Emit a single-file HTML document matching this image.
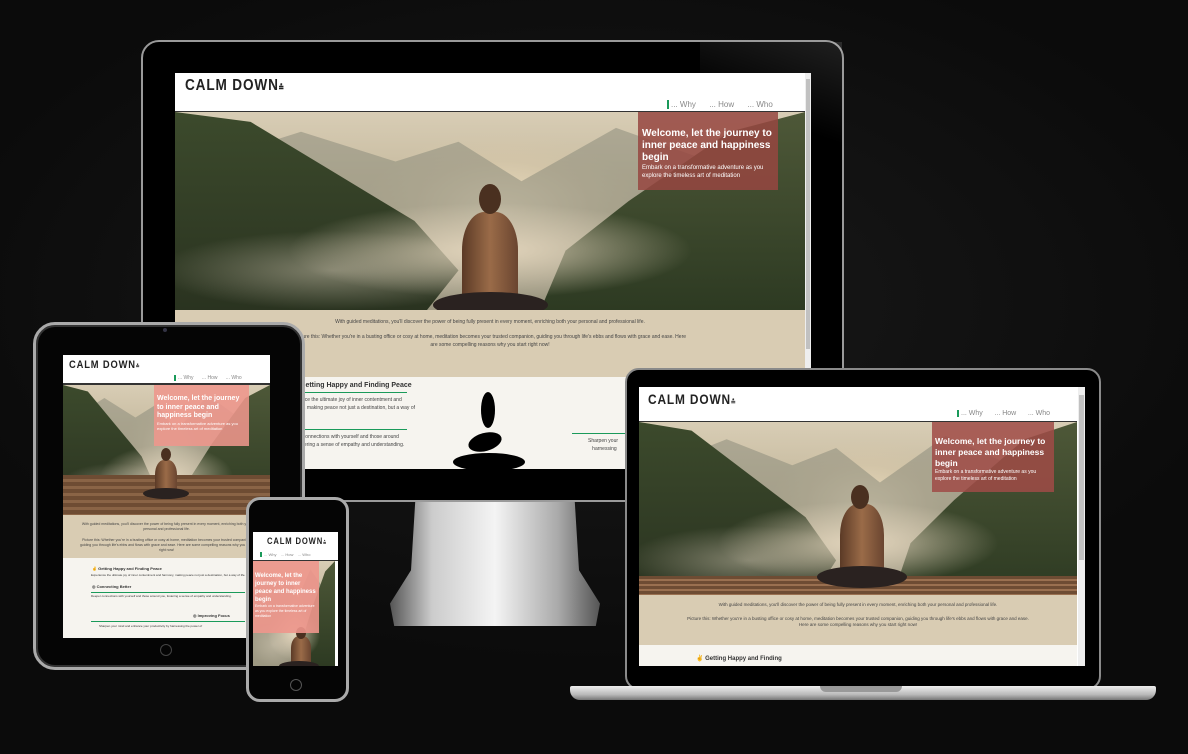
<!DOCTYPE html>
<html><head><meta charset="utf-8"><style>
*{margin:0;padding:0;box-sizing:border-box}
body{width:1188px;height:754px;overflow:hidden;background:radial-gradient(ellipse 70% 60% at 50% 40%,#1a1a1a,#0b0b0b 80%);position:relative;font-family:"Liberation Sans",sans-serif}
.a{position:absolute}
.logo{font-family:"Liberation Sans Narrow","Liberation Sans",sans-serif;font-weight:bold;color:#222;letter-spacing:1px;transform:scaleX(.85);transform-origin:left}
.nav{color:#888;font-size:7px}
.nav b{font-weight:normal;border-left:2px solid #1a9a5a;padding-left:2px}
.hero{overflow:hidden;background:
radial-gradient(ellipse 28% 50% at 52% 50%,rgba(240,225,195,.95),rgba(215,200,170,.6) 50%,transparent 80%),
linear-gradient(180deg,#d8cdb5 0%,#c9bda2 30%,#b0a58a 100%)}
.hero .m{position:absolute;left:0;top:0;width:100%;height:100%}
.m1{background:#8d8c7c;opacity:.55;clip-path:polygon(0 30%,20% 10%,35% 25%,45% 15%,55% 35%,70% 8%,85% 25%,100% 15%,100% 100%,0 100%)}
.m2{background:linear-gradient(180deg,#3c4a2c,#2a3320);clip-path:polygon(0 0,12% 5%,25% 30%,38% 55%,45% 80%,40% 100%,0 100%)}
.m3{background:linear-gradient(180deg,#4e5838,#2d3a22);clip-path:polygon(100% 0,88% 10%,72% 45%,62% 70%,58% 100%,100% 100%)}
.mist{background:radial-gradient(ellipse 40% 30% at 50% 70%,rgba(235,220,195,.85),transparent 80%),radial-gradient(ellipse 35% 25% at 25% 80%,rgba(210,200,180,.5),transparent 80%)}
.beige{background:#d9ccb3}
.light{background:#f6f4ef}
.welc{color:#fff;font-weight:bold}
.welc p{font-weight:normal}
.fig .h{position:absolute;background:#4a3020;border-radius:50%}
.fig .b{position:absolute;background:linear-gradient(90deg,#5b3a26,#9a6b48,#6a4530);border-radius:40% 40% 10% 10%}
.fig .l{position:absolute;background:#2a2220;border-radius:50%}
.txt{font-size:5px;color:#444;text-align:center;line-height:1.5}
</style></head><body>

<!-- MONITOR -->
<div class="a" style="left:141px;top:40px;width:703px;height:462px;border-radius:18px;background:#000;border:2px solid #9a9a9a"></div>
<div class="a" style="left:700px;top:42px;width:142px;height:120px;background:linear-gradient(200deg,rgba(255,255,255,.12),transparent 60%)"></div>
<div class="a" style="left:390px;top:502px;width:210px;height:124px;background:linear-gradient(90deg,#555,#ccc 20%,#f4f4f4 50%,#aaa 80%,#555);clip-path:polygon(12% 0,88% 0,90% 55%,100% 82%,98% 100%,2% 100%,0 82%,10% 55%)"></div>
<div class="a" style="left:175px;top:73px;width:636px;height:396px;background:#fff;overflow:hidden">
  <div class="a logo" style="left:10px;top:4px;font-size:16px">CALM DOWN<span style="font-size:10px">⩮</span></div>
  <div class="a nav" style="left:492px;top:27px;font-size:8px"><b>... Why</b>&nbsp;&nbsp;&nbsp;&nbsp;&nbsp;&nbsp;... How&nbsp;&nbsp;&nbsp;&nbsp;&nbsp;&nbsp;... Who</div>
  <div class="a" style="left:0;top:38px;width:630px;height:1px;background:#333"></div>
  <div class="a hero" style="left:0;top:39px;width:630px;height:198px">
    <div class="m m1"></div><div class="m m2"></div><div class="m m3"></div><div class="m mist"></div>
    <div class="fig"><div class="b" style="left:287px;top:100px;width:56px;height:95px"></div><div class="h" style="left:304px;top:72px;width:22px;height:30px"></div><div class="l" style="left:258px;top:180px;width:115px;height:26px"></div></div>
    <div class="a welc" style="left:463px;top:0;width:140px;height:78px;background:rgba(150,70,65,.85);padding:16px 4px 0;font-size:10px;line-height:12px">Welcome, let the journey to inner peace and happiness begin<p style="font-size:6px;line-height:8px">Embark on a transformative adventure as you explore the timeless art of meditation</p></div>
  </div>
  <div class="a beige" style="left:0;top:237px;width:630px;height:67px"><div class="txt" style="margin:9px 115px 0">With guided meditations, you'll discover the power of being fully present in every moment, enriching both your personal and professional life.<br><br>Picture this: Whether you're in a busting office or cosy at home, meditation becomes your trusted companion, guiding you through life's ebbs and flows with grace and ease. Here are some compelling reasons why you start right now!</div></div>
  <div class="a light" style="left:0;top:304px;width:630px;height:92px">
    <div class="a" style="left:125px;top:5px;font-size:7px;font-weight:bold;color:#333">Getting Happy and Finding Peace</div>
    <div class="a" style="left:110px;top:15px;width:122px;height:1px;background:#1a9a5a"></div>
    <div class="a" style="left:110px;top:19px;font-size:5px;color:#444;line-height:8px">Experience the ultimate joy of inner contentment and<br>harmony, making peace not just a destination, but a way of</div>
    <div class="a" style="left:110px;top:52px;width:122px;height:1px;background:#1a9a5a"></div>
    <div class="a" style="left:110px;top:56px;font-size:5px;color:#444;line-height:8px">Deeper connections with yourself and those around<br>you, fostering a sense of empathy and understanding.</div>
    <div class="a" style="left:397px;top:56px;width:60px;height:1px;background:#1a9a5a"></div>
    <div class="a" style="left:413px;top:60px;font-size:5px;color:#444;line-height:8px">Sharpen your<br>&nbsp;&nbsp;&nbsp;harnessing</div>
    <div class="a" style="left:306px;top:15px;width:14px;height:36px;background:#000;border-radius:50%"></div>
    <div class="a" style="left:293px;top:56px;width:34px;height:18px;background:#000;border-radius:50%;transform:rotate(-15deg)"></div>
    <div class="a" style="left:278px;top:76px;width:72px;height:18px;background:#000;border-radius:50%"></div>
  </div>
  <div class="a" style="left:630px;top:0;width:6px;height:396px;background:#eee"><div style="margin:6px 1px;height:270px;background:#c1c1c1"></div></div>
</div>

<!-- TABLET -->
<div class="a" style="left:33px;top:322px;width:272px;height:348px;border-radius:22px;background:#050505;border:3px solid #aaa;box-shadow:inset 0 0 0 2px #333"></div>
<div class="a" style="left:163px;top:328px;width:4px;height:4px;border-radius:50%;background:#334"></div>
<div class="a" style="left:160px;top:644px;width:12px;height:12px;border-radius:50%;border:1px solid #444"></div>
<div class="a" style="left:63px;top:355px;width:207px;height:283px;background:#fff;overflow:hidden">
  <div class="a logo" style="left:6px;top:4px;font-size:11px">CALM DOWN<span style="font-size:7px">⩮</span></div>
  <div class="a nav" style="left:111px;top:20px;font-size:5px"><b>... Why</b>&nbsp;&nbsp;&nbsp;&nbsp;&nbsp;&nbsp;... How&nbsp;&nbsp;&nbsp;&nbsp;&nbsp;&nbsp;... Who</div>
  <div class="a" style="left:0;top:28px;width:207px;height:2px;background:#333"></div>
  <div class="a hero" style="left:0;top:30px;width:207px;height:130px">
    <div class="m m1"></div><div class="m m2"></div><div class="m m3"></div><div class="m mist"></div>
    <div class="a" style="left:0;top:90px;width:207px;height:40px;background:repeating-linear-gradient(180deg,#6e4c33 0 4px,#8a6446 4px 7px)"></div>
    <div class="fig"><div class="b" style="left:92px;top:75px;width:22px;height:36px"></div><div class="h" style="left:98px;top:63px;width:10px;height:13px"></div><div class="l" style="left:80px;top:103px;width:46px;height:11px"></div></div>
    <div class="a welc" style="left:91px;top:0;width:95px;height:61px;background:rgba(238,150,140,.88);padding:10px 3px 0;font-size:7px;line-height:8.5px">Welcome, let the journey to inner peace and happiness begin<p style="font-size:4px;line-height:5px">Embark on a transformative adventure as you explore the timeless art of meditation</p></div>
  </div>
  <div class="a beige" style="left:0;top:160px;width:207px;height:43px"><div class="txt" style="margin:7px 14px 0;font-size:3.5px">With guided meditations, you'll discover the power of being fully present in every moment, enriching both your personal and professional life.<br><br>Picture this: Whether you're in a busting office or cosy at home, meditation becomes your trusted companion, guiding you through life's ebbs and flows with grace and ease. Here are some compelling reasons why you start right now!</div></div>
  <div class="a light" style="left:0;top:203px;width:207px;height:80px;font-size:4px;color:#333">
    <div class="a" style="left:29px;top:8px;font-weight:bold">✌ Getting Happy and Finding Peace</div>
    <div class="a" style="left:28px;top:15px;width:160px;font-size:3px">Experience the ultimate joy of inner contentment and harmony, making peace not just a destination, but a way of life.</div>
    <div class="a" style="left:29px;top:26px;font-weight:bold">◎ Connecting Better</div>
    <div class="a" style="left:28px;top:34px;width:154px;height:1px;background:#1a9a5a"></div>
    <div class="a" style="left:28px;top:36px;width:160px;font-size:3px">Deeper connections with yourself and those around you, fostering a sense of empathy and understanding.</div>
    <div class="a" style="left:130px;top:55px;font-weight:bold">◎ Improving Focus</div>
    <div class="a" style="left:28px;top:63px;width:154px;height:1px;background:#1a9a5a"></div>
    <div class="a" style="left:36px;top:66px;font-size:3px">Sharpen your mind and enhance your productivity by harnessing the power of</div>
  </div>
</div>

<!-- PHONE -->
<div class="a" style="left:246px;top:497px;width:103px;height:205px;border-radius:14px;background:#050505;border:3px solid #aaa"></div>
<div class="a" style="left:288px;top:546px;width:16px;height:2px;background:#333"></div>
<div class="a" style="left:290px;top:679px;width:12px;height:12px;border-radius:50%;border:1px solid #555"></div>
<div class="a" style="left:253px;top:532px;width:85px;height:134px;background:#fff;overflow:hidden">
  <div class="a logo" style="left:14px;top:4px;font-size:9px">CALM DOWN<span style="font-size:6px">⩮</span></div>
  <div class="a nav" style="left:7px;top:20px;font-size:4px"><b>... Why</b>&nbsp;&nbsp;&nbsp;&nbsp;... How&nbsp;&nbsp;&nbsp;&nbsp;... Who</div>
  <div class="a" style="left:0;top:28px;width:85px;height:1px;background:#333"></div>
  <div class="a hero" style="left:0;top:29px;width:82px;height:105px">
    <div class="m m1"></div><div class="m m3"></div><div class="m mist"></div>
    <div class="fig"><div class="b" style="left:38px;top:75px;width:20px;height:30px"></div><div class="h" style="left:43px;top:66px;width:10px;height:12px"></div><div class="l" style="left:26px;top:100px;width:40px;height:10px"></div></div>
    <div class="a welc" style="left:0;top:0;width:66px;height:72px;background:rgba(238,150,140,.9);padding:11px 2px 0;font-size:6px;line-height:8px">Welcome, let the journey to inner peace and happiness begin<p style="font-size:3.5px;line-height:5px">Embark on a transformative adventure as you explore the timeless art of meditation</p></div>
  </div>
</div>

<!-- LAPTOP -->
<div class="a" style="left:625px;top:368px;width:476px;height:322px;border-radius:14px;background:#000;border:2px solid #8a8a8a"></div>
<div class="a" style="left:570px;top:686px;width:586px;height:14px;border-radius:2px 2px 10px 10px;background:linear-gradient(180deg,#eee,#bbb 60%,#777)"></div>
<div class="a" style="left:820px;top:686px;width:82px;height:6px;border-radius:0 0 6px 6px;background:#999"></div>
<div class="a" style="left:639px;top:387px;width:446px;height:279px;background:#fff;overflow:hidden">
  <div class="a logo" style="left:9px;top:4px;font-size:14px">CALM DOWN<span style="font-size:9px">⩮</span></div>
  <div class="a nav" style="left:318px;top:23px;font-size:7px"><b>... Why</b>&nbsp;&nbsp;&nbsp;&nbsp;&nbsp;&nbsp;... How&nbsp;&nbsp;&nbsp;&nbsp;&nbsp;&nbsp;... Who</div>
  <div class="a" style="left:0;top:34px;width:438px;height:1px;background:#333"></div>
  <div class="a hero" style="left:0;top:35px;width:438px;height:173px">
    <div class="m m1"></div><div class="m m2"></div><div class="m m3"></div><div class="m mist"></div>
    <div class="a" style="left:0;top:154px;width:438px;height:19px;background:repeating-linear-gradient(180deg,#6e4c33 0 3px,#9a7050 3px 5px)"></div>
    <div class="fig"><div class="b" style="left:201px;top:82px;width:44px;height:78px"></div><div class="h" style="left:212px;top:63px;width:18px;height:24px"></div><div class="l" style="left:178px;top:144px;width:90px;height:22px"></div></div>
    <div class="a welc" style="left:293px;top:0;width:122px;height:70px;background:rgba(160,75,70,.85);padding:14px 3px 0;font-size:8.5px;line-height:11px">Welcome, let the journey to inner peace and happiness begin<p style="font-size:5px;line-height:7px">Embark on a transformative adventure as you explore the timeless art of meditation</p></div>
  </div>
  <div class="a beige" style="left:0;top:208px;width:438px;height:50px"><div class="txt" style="margin:7px 45px 0;font-size:4.5px">With guided meditations, you'll discover the power of being fully present in every moment, enriching both your personal and professional life.<br><br>Picture this: Whether you're in a busting office or cosy at home, meditation becomes your trusted companion, guiding you through life's ebbs and flows with grace and ease. Here are some compelling reasons why you start right now!</div></div>
  <div class="a light" style="left:0;top:258px;width:438px;height:21px"><div class="a" style="left:57px;top:10px;font-size:6px;color:#333;font-weight:bold">✌ Getting Happy and Finding</div></div>
  <div class="a" style="left:439px;top:0;width:7px;height:279px;background:#eee"><div style="margin:8px 1px;height:165px;background:#c1c1c1"></div></div>
</div>
</body></html>
